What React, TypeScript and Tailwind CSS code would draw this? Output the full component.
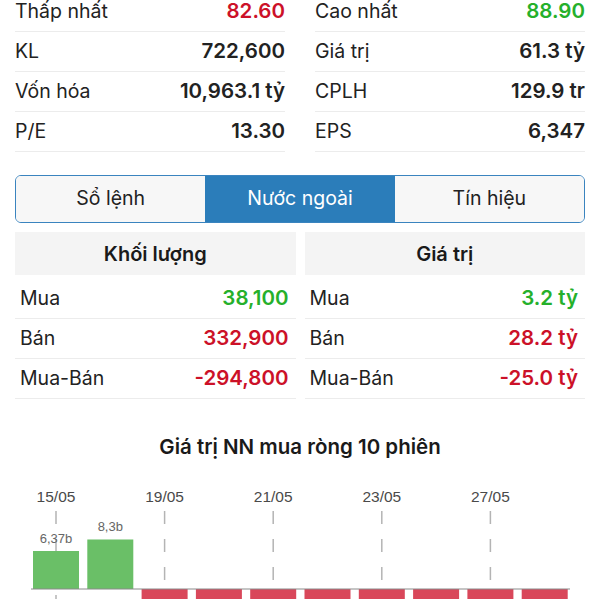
import React from 'react';

interface StatRow {
  label: string;
  value: string;
  color?: string;
}

const LEFT_STATS: StatRow[] = [
  { label: 'Thấp nhất', value: '82.60', color: 'text-[#cc1128]' },
  { label: 'KL', value: '722,600' },
  { label: 'Vốn hóa', value: '10,963.1 tỷ' },
  { label: 'P/E', value: '13.30' },
];

const RIGHT_STATS: StatRow[] = [
  { label: 'Cao nhất', value: '88.90', color: 'text-[#25b02b]' },
  { label: 'Giá trị', value: '61.3 tỷ' },
  { label: 'CPLH', value: '129.9 tr' },
  { label: 'EPS', value: '6,347' },
];

const VOLUME: StatRow[] = [
  { label: 'Mua', value: '38,100', color: 'text-[#25b02b]' },
  { label: 'Bán', value: '332,900', color: 'text-[#cc1128]' },
  { label: 'Mua-Bán', value: '-294,800', color: 'text-[#cc1128]' },
];

const VALUE: StatRow[] = [
  { label: 'Mua', value: '3.2 tỷ', color: 'text-[#25b02b]' },
  { label: 'Bán', value: '28.2 tỷ', color: 'text-[#cc1128]' },
  { label: 'Mua-Bán', value: '-25.0 tỷ', color: 'text-[#cc1128]' },
];

const TABS = ['Sổ lệnh', 'Nước ngoài', 'Tín hiệu'];

// net foreign value per session, positive = green
const BARS = [
  { v: 6.37, label: '6,37b' },
  { v: 8.3, label: '8,3b' },
  { v: -5 }, { v: -5 }, { v: -5 }, { v: -5 }, { v: -5 }, { v: -5 }, { v: -5 }, { v: -5 },
];

const DATES = ['15/05', '19/05', '21/05', '23/05', '27/05'];

function StatColumn({ rows }: { rows: StatRow[] }) {
  return (
    <div className="flex flex-col">
      {rows.map(r => (
        <div key={r.label} className="h-10 flex items-center justify-between border-b border-[#ececec]">
          <span className="text-[19.5px] text-[#222]">{r.label}</span>
          <span className={`text-[20.5px] font-semibold ${r.color ?? 'text-[#222]'}`}>{r.value}</span>
        </div>
      ))}
    </div>
  );
}

function ForeignColumn({ title, rows }: { title: string; rows: StatRow[] }) {
  return (
    <div className="flex flex-col">
      <div className="h-[43px] flex items-center justify-center bg-[#f4f4f4]">
        <span className="text-[20px] font-semibold text-[#1a1a1a]">{title}</span>
      </div>
      <div className="h-1" />
      {rows.map(r => (
        <div key={r.label} className="h-10 flex items-center justify-between pl-[5px] pr-[7px] border-b border-[#ececec]">
          <span className="text-[19.5px] text-[#222]">{r.label}</span>
          <span className={`text-[20.5px] font-semibold ${r.color ?? 'text-[#222]'}`}>{r.value}</span>
        </div>
      ))}
    </div>
  );
}

function NetChart() {
  const pitch = 54.3;
  const base = 120;
  const scale = 38 / 6.37;
  return (
    <svg width="600" height="130" viewBox="0 0 600 130" className="block">
      {DATES.map((d, k) => {
        const x = 56 + pitch * 2 * k;
        return (
          <g key={d}>
            <text x={x} y={33} textAnchor="middle" fontSize="15.5" fill="#4a4a4a" fontFamily="Liberation Sans, Arial, sans-serif">{d}</text>
            <line x1={x} y1={42} x2={x} y2={140} stroke="#b4b4b4" strokeWidth="1.5" strokeDasharray="13 15" />
          </g>
        );
      })}
      {BARS.map((b, i) => {
        const x = 33 + pitch * i;
        const h = Math.abs(b.v) * scale;
        return b.v > 0 ? (
          <rect key={i} x={x} y={base - h} width={46} height={h} fill="#6abf67" />
        ) : (
          <rect key={i} x={x} y={base} width={46} height={30} fill="#d9475a" />
        );
      })}
      <line x1={31} y1={base} x2={570} y2={base} stroke="#8a8a8a" strokeWidth="1" />
      {BARS.map((b, i) =>
        b.label ? (
          <text key={b.label} x={33 + pitch * i + 23} y={base - Math.abs(b.v) * scale - 8} textAnchor="middle" fontSize="13" fill="#666" fontFamily="Liberation Sans, Arial, sans-serif">
            {b.label}
          </text>
        ) : null
      )}
    </svg>
  );
}

export default function App() {
  return (
    <div className="w-[600px] h-[600px] overflow-hidden bg-white" style={{ fontFamily: 'Inter, "Liberation Sans", Arial, sans-serif' }}>
      <div className="-mt-[8px] px-[15px] grid grid-cols-2 gap-[30px]">
        <StatColumn rows={LEFT_STATS} />
        <StatColumn rows={RIGHT_STATS} />
      </div>

      <div className="mt-[23px] mx-[15px] h-12 flex rounded-md border border-[#3a84bf] overflow-hidden">
        {TABS.map((t, i) => (
          <div
            key={t}
            className={`flex-1 flex items-center justify-center text-[19.5px] ${i === 1 ? 'bg-[#2b7dba] text-white' : 'bg-[#f7f7f7] text-[#222]'}`}
          >
            {t}
          </div>
        ))}
      </div>

      <div className="mt-[9px] mx-[15px] grid grid-cols-2 gap-[9px]">
        <ForeignColumn title="Khối lượng" rows={VOLUME} />
        <ForeignColumn title="Giá trị" rows={VALUE} />
      </div>

      <div className="mt-9 text-center text-[20.5px] font-semibold text-[#1a1a1a] leading-6">
        Giá trị NN mua ròng 10 phiên
      </div>

      <div className="mt-[10px]">
        <NetChart />
      </div>
    </div>
  );
}
